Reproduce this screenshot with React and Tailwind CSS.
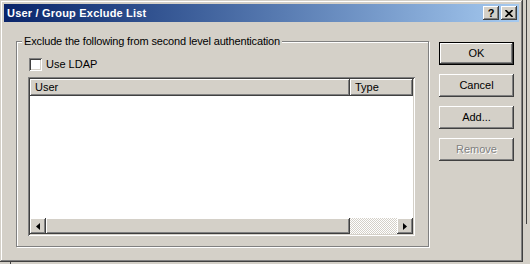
import { useState } from "react";

const raised =
  "shadow-[inset_-1px_-1px_0_#404040,inset_1px_1px_0_#ffffff,inset_-2px_-2px_0_#808080,inset_2px_2px_0_#d4d0c8]";
const sunken =
  "shadow-[inset_1px_1px_0_#808080,inset_-1px_-1px_0_#ffffff,inset_2px_2px_0_#404040,inset_-2px_-2px_0_#d4d0c8]";

function DialogButton({ label, isDefault, disabled }) {
  const face = (
    <div
      className={`flex h-full w-full items-center justify-center bg-[#d4d0c8] ${raised} ${
        disabled ? "text-[#808080] [text-shadow:1px_1px_0_#ffffff]" : "text-black"
      }`}
    >
      {label}
    </div>
  );
  if (isDefault) {
    return <div className="h-[23px] w-[75px] border border-black">{face}</div>;
  }
  return <div className="h-[23px] w-[75px]">{face}</div>;
}

function Arrow({ dir }) {
  return (
    <div className={`flex h-4 w-4 items-center justify-center bg-[#d4d0c8] ${raised}`}>
      <svg width="4" height="7" viewBox="0 0 4 7">
        {dir === "left" ? <path d="M4 0 L0 3.5 L4 7 Z" fill="#000" /> : <path d="M0 0 L4 3.5 L0 7 Z" fill="#000" />}
      </svg>
    </div>
  );
}

export default function App() {
  const [useLdap, setUseLdap] = useState(false);

  return (
    <div className="relative h-[264px] w-[530px] overflow-hidden bg-[#d4d0c8] font-['Liberation_Sans',Arial,sans-serif] text-[11px] text-black">
      {/* window behind */}
      <div className="absolute left-[526px] top-0 h-[224px] w-px bg-[#404040]" />
      <div className="absolute left-[10px] top-[262px] h-[2px] w-px bg-[#404040]" />

      <div className="flex h-[262px] w-[523px] flex-col bg-[#d4d0c8] p-[4px] shadow-[inset_-1px_-1px_0_#404040,inset_1px_1px_0_#d4d0c8,inset_-2px_-2px_0_#808080,inset_2px_2px_0_#ffffff]">
        <div className="flex h-[18px] items-center justify-between bg-linear-to-r from-[#0a246a] to-[#a6caf0] pl-[3px] pr-[2px]">
          <span className="text-[11px] font-bold tracking-[0.2px] text-white">User / Group Exclude List</span>
          <div className="flex gap-[2px]">
            <div className={`flex h-[14px] w-[16px] items-center justify-center bg-[#d4d0c8] ${raised}`}>
              <span className="text-[11px] font-bold leading-none text-black">?</span>
            </div>
            <div className={`flex h-[14px] w-[16px] items-center justify-center bg-[#d4d0c8] ${raised}`}>
              <svg width="8" height="7" viewBox="0 0 8 7">
                <path d="M0.5 0 L7.5 7 M7.5 0 L0.5 7" stroke="#000" strokeWidth="1.6" />
              </svg>
            </div>
          </div>
        </div>

        <div className="flex flex-1 items-start pl-[12px]">
          <div className="relative mt-[19px] h-[206px] w-[413px] border border-[#808080] shadow-[inset_1px_1px_0_#ffffff,1px_1px_0_#ffffff]">
            <span className="absolute left-[5px] top-[-8px] bg-[#d4d0c8] px-[2px] leading-[14px] tracking-[-0.15px]">
              Exclude the following from second level authentication
            </span>

            <div className="flex flex-col pl-[12px] pt-[16px]">
              <label className="flex items-center gap-[4px] leading-[13px]" onClick={() => setUseLdap((v) => !v)}>
                <div className={`flex h-[13px] w-[13px] items-center justify-center bg-white ${sunken}`}>
                  {useLdap && (
                    <svg width="7" height="7" viewBox="0 0 7 7">
                      <path d="M0 3 L2.5 5.5 L7 1" stroke="#000" strokeWidth="1.5" fill="none" />
                    </svg>
                  )}
                </div>
                <span>Use LDAP</span>
              </label>

              <div className={`-ml-px mt-[6px] flex h-[159px] w-[387px] flex-col bg-white p-[2px] ${sunken}`}>
                <div className="flex h-[17px]">
                  <div className={`flex w-[320px] items-center bg-[#d4d0c8] pl-[5px] ${raised}`}>User</div>
                  <div className={`flex flex-1 items-center bg-[#d4d0c8] pl-[5px] ${raised}`}>Type</div>
                </div>
                <div className="flex-1 bg-white" />
                <div className="flex h-4">
                  <Arrow dir="left" />
                  <div className={`w-[304px] bg-[#d4d0c8] ${raised}`} />
                  <div className="flex-1 bg-[repeating-conic-gradient(#ffffff_0_25%,#d4d0c8_0_50%)] bg-[length:2px_2px]" />
                  <Arrow dir="right" />
                </div>
              </div>
            </div>
          </div>

          <div className="ml-[10px] mt-[20px] flex flex-col gap-[9px]">
            <DialogButton label="OK" isDefault />
            <DialogButton label="Cancel" />
            <DialogButton label="Add..." />
            <DialogButton label="Remove" disabled />
          </div>
        </div>
      </div>
    </div>
  );
}
